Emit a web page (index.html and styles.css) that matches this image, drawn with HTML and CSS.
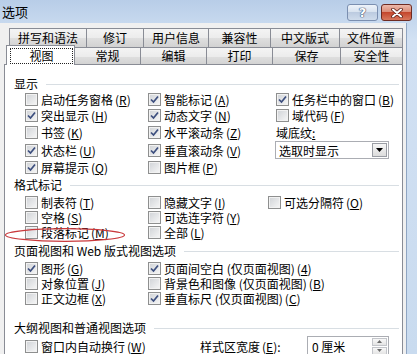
FILE: index.html
```html
<!DOCTYPE html>
<html lang="zh-CN">
<head>
    <meta charset="UTF-8">
    <title>选项</title>
    <link rel="stylesheet" href="styles.css">
</head>
<body>
<div class="window">
    <!-- Title bar -->
    <div class="titlebar">
        <span class="title">选项</span>
        <div class="caption-btns">
            <span class="cap-btn help">?</span>
            <span class="cap-btn close">
                <svg width="14" height="10" viewBox="0 0 14 10"><path d="M3 1.5 L11 8.5 M11 1.5 L3 8.5" stroke="#5a1d14" stroke-width="3.6" stroke-linecap="round"/><path d="M3 1.5 L11 8.5 M11 1.5 L3 8.5" stroke="#fff" stroke-width="2" stroke-linecap="round"/></svg>
            </span>
        </div>
    </div>

    <div class="dialog">
        <!-- Tabs -->
        <div class="tab-row back">
            <span class="tab">拼写和语法</span>
            <span class="tab">修订</span>
            <span class="tab">用户信息</span>
            <span class="tab">兼容性</span>
            <span class="tab">中文版式</span>
            <span class="tab">文件位置</span>
        </div>
        <div class="tab-row front">
            <span class="tab active"><span class="focus">视图</span></span>
            <span class="tab">常规</span>
            <span class="tab">编辑</span>
            <span class="tab">打印</span>
            <span class="tab">保存</span>
            <span class="tab">安全性</span>
        </div>

        <div class="panel">
            <!-- 显示 -->
            <div class="group-title">显示</div>
            <div class="opts opts-display">
                <label class="opt"><span class="box"></span>启动任务窗格<span class="acc">(<u>R</u>)</span></label>
                <label class="opt"><span class="box on"><svg width="9" height="9" viewBox="0 0 9 9"><path d="M1 4.5 L3.5 7 L8 1.5" fill="none" stroke="#3c4e7e" stroke-width="1.7"/></svg></span>智能标记<span class="acc">(<u>A</u>)</span></label>
                <label class="opt"><span class="box on"><svg width="9" height="9" viewBox="0 0 9 9"><path d="M1 4.5 L3.5 7 L8 1.5" fill="none" stroke="#3c4e7e" stroke-width="1.7"/></svg></span>任务栏中的窗口<span class="acc">(<u>B</u>)</span></label>

                <label class="opt"><span class="box on"><svg width="9" height="9" viewBox="0 0 9 9"><path d="M1 4.5 L3.5 7 L8 1.5" fill="none" stroke="#3c4e7e" stroke-width="1.7"/></svg></span>突出显示<span class="acc">(<u>H</u>)</span></label>
                <label class="opt"><span class="box on"><svg width="9" height="9" viewBox="0 0 9 9"><path d="M1 4.5 L3.5 7 L8 1.5" fill="none" stroke="#3c4e7e" stroke-width="1.7"/></svg></span>动态文字<span class="acc">(<u>N</u>)</span></label>
                <label class="opt"><span class="box"></span>域代码<span class="acc">(<u>F</u>)</span></label>

                <label class="opt"><span class="box"></span>书签<span class="acc">(<u>K</u>)</span></label>
                <label class="opt"><span class="box on"><svg width="9" height="9" viewBox="0 0 9 9"><path d="M1 4.5 L3.5 7 L8 1.5" fill="none" stroke="#3c4e7e" stroke-width="1.7"/></svg></span>水平滚动条<span class="acc">(<u>Z</u>)</span></label>
                <span class="field-label">域底纹<u>:</u></span>

                <label class="opt"><span class="box on"><svg width="9" height="9" viewBox="0 0 9 9"><path d="M1 4.5 L3.5 7 L8 1.5" fill="none" stroke="#3c4e7e" stroke-width="1.7"/></svg></span>状态栏<span class="acc">(<u>U</u>)</span></label>
                <label class="opt"><span class="box on"><svg width="9" height="9" viewBox="0 0 9 9"><path d="M1 4.5 L3.5 7 L8 1.5" fill="none" stroke="#3c4e7e" stroke-width="1.7"/></svg></span>垂直滚动条<span class="acc">(<u>V</u>)</span></label>
                <div class="combo">
                    <span>选取时显示</span>
                    <span class="combo-btn"><svg width="7" height="4" viewBox="0 0 7 4"><path d="M0 0 H7 L3.5 4 Z" fill="#000"/></svg></span>
                </div>

                <label class="opt"><span class="box on"><svg width="9" height="9" viewBox="0 0 9 9"><path d="M1 4.5 L3.5 7 L8 1.5" fill="none" stroke="#3c4e7e" stroke-width="1.7"/></svg></span>屏幕提示<span class="acc">(<u>Q</u>)</span></label>
                <label class="opt"><span class="box"></span>图片框<span class="acc">(<u>P</u>)</span></label>
            </div>

            <!-- 格式标记 -->
            <div class="group-title g-marks">格式标记</div>
            <div class="opts opts-marks">
                <label class="opt"><span class="box"></span>制表符<span class="acc">(<u>T</u>)</span></label>
                <label class="opt"><span class="box"></span>隐藏文字<span class="acc">(<u>I</u>)</span></label>
                <label class="opt"><span class="box"></span>可选分隔符<span class="acc">(<u>O</u>)</span></label>

                <label class="opt"><span class="box"></span>空格<span class="acc">(<u>S</u>)</span></label>
                <label class="opt"><span class="box"></span>可选连字符<span class="acc">(<u>Y</u>)</span></label>
                <span></span>

                <label class="opt"><span class="box"></span>段落标记<span class="acc">(<u>M</u>)</span></label>
                <label class="opt"><span class="box"></span>全部<span class="acc">(<u>L</u>)</span></label>
            </div>

            <!-- 页面视图和 Web 版式视图选项 -->
            <div class="group-title g-page">页面视图和 Web 版式视图选项</div>
            <div class="opts opts-page">
                <label class="opt"><span class="box on"><svg width="9" height="9" viewBox="0 0 9 9"><path d="M1 4.5 L3.5 7 L8 1.5" fill="none" stroke="#3c4e7e" stroke-width="1.7"/></svg></span>图形<span class="acc">(<u>G</u>)</span></label>
                <label class="opt"><span class="box on"><svg width="9" height="9" viewBox="0 0 9 9"><path d="M1 4.5 L3.5 7 L8 1.5" fill="none" stroke="#3c4e7e" stroke-width="1.7"/></svg></span>页面间空白 (仅页面视图)<span class="acc">(<u>4</u>)</span></label>

                <label class="opt"><span class="box"></span>对象位置<span class="acc">(<u>J</u>)</span></label>
                <label class="opt"><span class="box"></span>背景色和图像 (仅页面视图)<span class="acc">(<u>B</u>)</span></label>

                <label class="opt"><span class="box"></span>正文边框<span class="acc">(<u>X</u>)</span></label>
                <label class="opt"><span class="box on"><svg width="9" height="9" viewBox="0 0 9 9"><path d="M1 4.5 L3.5 7 L8 1.5" fill="none" stroke="#3c4e7e" stroke-width="1.7"/></svg></span>垂直标尺 (仅页面视图)<span class="acc">(<u>C</u>)</span></label>
            </div>

            <!-- 大纲视图和普通视图选项 -->
            <div class="group-title g-outline">大纲视图和普通视图选项</div>
            <div class="outline-row">
                <label class="opt wrap-opt"><span class="box"></span>窗口内自动换行<span class="acc">(<u>W</u>)</span></label>
                <span class="style-label">样式区宽度<span class="acc">(<u>E</u>)</span>:</span>
                <div class="spin">
                    <span>0 厘米</span>
                    <span class="spin-btns">
                        <span class="spin-btn"><svg width="5" height="3" viewBox="0 0 5 3"><path d="M0 3 H5 L2.5 0 Z" fill="#6b6b6b"/></svg></span>
                        <span class="spin-btn"><svg width="5" height="3" viewBox="0 0 5 3"><path d="M0 0 H5 L2.5 3 Z" fill="#6b6b6b"/></svg></span>
                    </span>
                </div>
            </div>

            <!-- annotation ring -->
            <svg class="ring" width="124" height="16" viewBox="0 0 124 16"><ellipse cx="61" cy="8" rx="59.5" ry="6.3" fill="none" stroke="#c9393c" stroke-width="1.2"/></svg>
        </div>
    </div>
</div>
</body>
</html>
```

FILE: styles.css
```css
/* Word options dialog, Vista basic look */
* {
    box-sizing: border-box;
}
body {
    margin: 0;
    width: 417px;
    height: 354px;
    overflow: hidden;
    font-family: "Noto Sans CJK SC", sans-serif;
    font-size: 12px;
    line-height: 15px;
    color: #000;
    background: #c8daef;
}
.window {
    width: 417px;
    height: 354px;
    background: linear-gradient(#b8cde8, #d2e1f3 40px, #c9dbef);
}

/* title bar */
.titlebar {
    height: 23px;
    display: flex;
    justify-content: space-between;
    align-items: flex-start;
    padding: 0 5px 0 2px;
}
.title {
    font-size: 13px;
    line-height: 24px;
}
.caption-btns {
    display: flex;
    gap: 3px;
    margin-top: 4px;
}
.cap-btn {
    width: 31px;
    height: 17px;
    border-radius: 3px;
    display: flex;
    align-items: center;
    justify-content: center;
}
.help {
    border: 1px solid #7b8fb0;
    background: linear-gradient(#eef3fa, #d6e1ee 50%, #bccbe0 50%, #cfdcec);
    color: #fff;
    font: bold 13px/15px "DejaVu Sans", sans-serif;
    text-shadow: 0 0 1px #34496e, 0 0 1px #34496e, 0 0 1px #34496e;
}
.close {
    border: 1px solid #6e2b22;
    background: linear-gradient(#edb9ab, #d98873 50%, #c4462d 50%, #d9785d);
}

/* dialog body */
.dialog {
    width: 407px;
    height: 331px;
    background: #f0f0f0;
    border-right: 1px solid #8fa5c2;
    padding-top: 5px;
    overflow: hidden;
}

/* tabs */
.tab-row {
    display: grid;
}
.tab-row.back {
    margin-left: 9px;
    height: 19px;
    grid-template-columns: 77px 57px 65px 62px 69px 64px;
}
.tab-row.front {
    margin-left: 6px;
    height: 17px;
    grid-template-columns: 68px 66px 66px 66px 68px 63px;
}
.tab {
    border-top: 1px solid #898c95;
    border-left: 1px solid #898c95;
    background: linear-gradient(#f4f4f4, #ececec 50%, #dfdfdf 50%, #d2d2d2);
    text-align: center;
    white-space: nowrap;
}
.tab:last-child {
    border-right: 1px solid #898c95;
}
.back .tab {
    line-height: 18px;
}
.front .tab {
    line-height: 16px;
}
.tab.active {
    position: relative;
    z-index: 1;
    height: 20px;
    margin-top: -2px;
    margin-right: -1px;
    border-right: 1px solid #898c95;
    background: #fff;
}
.focus {
    display: block;
    height: 16px;
    margin: 2px 1px 0 3px;
    border: 1px dotted #222;
    line-height: 14px;
}

/* tab page */
.panel {
    position: relative;
    margin-left: 4px;
    width: 399px;
    height: 300px;
    background: #fff;
    border: 1px solid #898c95;
    padding: 12px 3px 0 9px;
}
.group-title {
    display: flex;
    align-items: center;
    height: 14px;
    line-height: 14px;
    white-space: nowrap;
}
.group-title::after {
    content: "";
    flex: 1;
    height: 1px;
    margin-left: 8px;
    background: #d8dee3;
}
.g-marks {
    margin-top: 2px;
}
.g-page {
    margin-top: 4px;
}
.g-outline {
    margin-top: 15px;
}
.opts {
    display: grid;
    margin-left: 11px;
}
.opts-display {
    grid-template-columns: 123px 128px 1fr;
    grid-template-rows: 16px 17px 17px 18px 17px;
}
.opts-marks {
    margin-top: 3px;
    grid-template-columns: 123px 120px 1fr;
    grid-auto-rows: 15px;
}
.opts-page {
    margin-top: 3px;
    grid-template-columns: 123px 1fr;
    grid-auto-rows: 15px;
}
.opt {
    display: flex;
    align-items: center;
    white-space: nowrap;
    line-height: 15px;
}
.acc {
    margin-left: 2px;
}
.box {
    flex: none;
    width: 13px;
    height: 13px;
    margin-right: 3px;
    border: 1px solid #8e8f8f;
    background: linear-gradient(135deg, #cfd2d6, #f7f7f7);
    box-shadow: inset 0 0 0 1px #f2f2f2;
    display: flex;
    align-items: center;
    justify-content: center;
}
.field-label {
    display: flex;
    align-items: center;
}

/* combo box */
.combo {
    align-self: center;
    margin-left: -1px;
    width: 114px;
    height: 18px;
    border: 1px solid #abadb3;
    background: #fff;
    display: flex;
    align-items: center;
    justify-content: space-between;
    padding-left: 3px;
}
.combo-btn {
    width: 15px;
    height: 14px;
    margin-right: 1px;
    border: 1px solid #9a9da4;
    background: linear-gradient(#f6f6f6, #dcdcdc);
    display: flex;
    align-items: center;
    justify-content: center;
}

/* outline row */
.outline-row {
    display: flex;
    align-items: center;
    height: 20px;
    margin: 1px 0 0 11px;
}
.wrap-opt {
    width: 175px;
}
.style-label {
    width: 107px;
}
.spin {
    width: 82px;
    height: 21px;
    border: 1px solid #abadb3;
    background: #fff;
    display: flex;
    align-items: center;
    justify-content: space-between;
    padding-left: 4px;
}
.spin-btns {
    display: flex;
    flex-direction: column;
    gap: 1px;
    margin-right: 1px;
}
.spin-btn {
    width: 15px;
    height: 8px;
    border: 1px solid #c3c5ca;
    background: linear-gradient(#f8f8f8, #e4e4e4);
    display: flex;
    align-items: center;
    justify-content: center;
}

/* red hand-drawn ring over one option */
.ring {
    position: absolute;
    left: -1px;
    top: 162px;
}
```
